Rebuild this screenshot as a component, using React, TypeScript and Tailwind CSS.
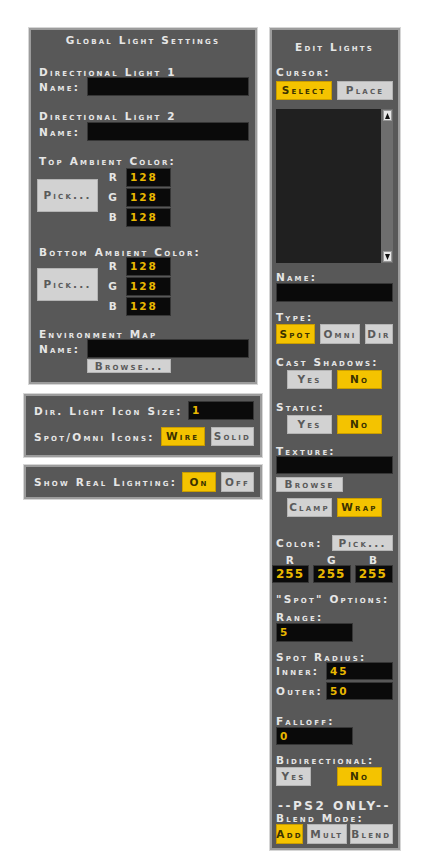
import React from 'react';

const font = "font-['DejaVu_Sans',sans-serif] font-bold [font-variant:small-caps] tracking-[2.2px]";

const Label = ({ text, className = '' }: { text: string; className?: string }) => (
  <div className={`h-[10px] leading-[10px] text-[10.5px] text-[#e6e6e6] whitespace-nowrap ${font} ${className}`}>
    {text}
  </div>
);

type BtnProps = { text: string; on?: boolean; className?: string };

const Btn = ({ text, on = false, className = '' }: BtnProps) => (
  <div
    className={`flex items-center justify-center text-[10.5px] leading-none whitespace-nowrap border ${font} ${
      on ? 'bg-[#f4c300] border-[#c99d00] text-[#3b3200]' : 'bg-[#d2d2d2] border-[#b4b4b4] text-[#5a5a5a]'
    } ${className}`}
  >
    {text}
  </div>
);

const Field = ({ value = '', className = '', big = false }: { value?: string; className?: string; big?: boolean }) => (
  <div
    className={`flex items-center bg-[#0a0a0a] border border-[#363636] text-[#e9b800] font-['DejaVu_Sans',sans-serif] font-bold leading-none ${
      big ? 'text-[12px] tracking-[1px] pl-[3px]' : 'text-[10.5px] tracking-[2px] pl-[3px]'
    } ${className}`}
  >
    {value}
  </div>
);

const ColorBlock = ({ className = '' }: { className?: string }) => (
  <div className={`flex items-center h-[59px] ${className}`}>
    <Btn text="Pick..." className="w-[61px] h-[33px] -ml-[2px] -mt-[4px]" />
    <div className="flex flex-col gap-[1px]">
      {['R', 'G', 'B'].map((c) => (
        <div key={c} className="flex items-center h-[19px]">
          <div className={`w-[28px] pr-[7px] text-right text-[10.5px] text-[#e6e6e6] ${font}`}>{c}</div>
          <Field value="128" className="w-[45px] h-[19px]" />
        </div>
      ))}
    </div>
  </div>
);

const NameRow = ({ className = '' }: { className?: string }) => (
  <div className={`flex items-center h-[19px] ${className}`}>
    <Label text="Name:" className="w-[48px]" />
    <Field className="w-[162px] h-[19px]" />
  </div>
);

const panel = 'bg-[#585858] border-2 border-[#9c9c9c] shadow-[0_0_0_1px_#d6d6d6]';

const GlobalPanel = () => (
  <div className={`${panel} mx-[5px] h-[356px] pl-[8px] flex flex-col`}>
    <Label text="Global Light Settings" className="mt-[5px] text-center -ml-[8px]" />
    <Label text="Directional Light 1" className="mt-[22px]" />
    <NameRow />
    <Label text="Directional Light 2" className="mt-[15px]" />
    <NameRow className="mt-[1px]" />
    <Label text="Top Ambient Color:" className="mt-[15px]" />
    <ColorBlock className="mt-[2px]" />
    <Label text="Bottom Ambient Color:" className="mt-[20px]" />
    <ColorBlock />
    <Label text="Environment Map" className="mt-[13px]" />
    <NameRow />
    <Btn text="Browse..." className="mt-[1px] ml-[48px] w-[84px] h-[14px]" />
  </div>
);

const IconPanel = () => (
  <div className={`${panel} mt-[10px] h-[63px] pl-[8px] pr-[6px] py-[5px] flex flex-col gap-[7px]`}>
    <div className="flex items-center h-[19px]">
      <Label text="Dir. Light Icon Size:" />
      <Field value="1" className="ml-auto w-[66px] h-[19px]" />
    </div>
    <div className="flex items-center h-[19px] gap-[6px]">
      <Label text="Spot/Omni Icons:" />
      <Btn text="Wire" on className="ml-auto w-[45px] h-[19px]" />
      <Btn text="Solid" className="w-[44px] h-[19px]" />
    </div>
  </div>
);

const LightingPanel = () => (
  <div className={`${panel} mt-[8px] h-[34px] pl-[8px] pr-[6px] flex items-center gap-[5px]`}>
    <Label text="Show Real Lighting:" />
    <Btn text="On" on className="ml-auto w-[34px] h-[20px]" />
    <Btn text="Off" className="w-[33px] h-[20px]" />
  </div>
);

const ScrollArrow = ({ up }: { up: boolean }) => (
  <div className="w-[9px] h-[11px] bg-[#e8e8e8] border border-[#9a9a9a] flex items-center justify-center">
    <svg width="5" height="6" viewBox="0 0 5 6">
      <path d={up ? 'M2.5 0 L5 6 L0 6 Z' : 'M0 0 L5 0 L2.5 6 Z'} fill="#111" />
    </svg>
  </div>
);

const EditPanel = () => (
  <div className={`${panel} w-[130px] h-[822px] pl-[4px] pr-[5px] flex flex-col`}>
    <Label text="Edit Lights" className="mt-[12px] text-center" />
    <Label text="Cursor:" className="mt-[15px]" />
    <div className="flex gap-[5px] mt-[4px]">
      <Btn text="Select" on className="w-[56px] h-[19px]" />
      <Btn text="Place" className="w-[56px] h-[19px]" />
    </div>
    <div className="flex mt-[9px] h-[154px]">
      <div className="w-[105px] bg-[#202020]" />
      <div className="w-[12px] bg-[#6e6e6e] flex flex-col items-center justify-between py-[1px]">
        <ScrollArrow up />
        <ScrollArrow up={false} />
      </div>
    </div>
    <Label text="Name:" className="mt-[9px]" />
    <Field className="mt-[1px] w-[117px] h-[19px]" />
    <Label text="Type:" className="mt-[10px]" />
    <div className="flex gap-[5px] mt-[2px]">
      <Btn text="Spot" on className="w-[39px] h-[20px]" />
      <Btn text="Omni" className="w-[40px] h-[20px]" />
      <Btn text="Dir" className="w-[28px] h-[20px]" />
    </div>
    <Label text="Cast Shadows:" className="mt-[13px]" />
    <div className="flex gap-[5px] mt-[3px] ml-[11px]">
      <Btn text="Yes" className="w-[45px] h-[19px]" />
      <Btn text="No" on className="w-[45px] h-[19px]" />
    </div>
    <Label text="Static:" className="mt-[13px]" />
    <div className="flex gap-[5px] mt-[3px] ml-[11px]">
      <Btn text="Yes" className="w-[45px] h-[19px]" />
      <Btn text="No" on className="w-[45px] h-[19px]" />
    </div>
    <Label text="Texture:" className="mt-[12px]" />
    <Field className="w-[117px] h-[18px]" />
    <Btn text="Browse" className="mt-[3px] w-[67px] h-[15px]" />
    <div className="flex gap-[5px] mt-[6px] ml-[11px]">
      <Btn text="Clamp" className="w-[45px] h-[19px]" />
      <Btn text="Wrap" on className="w-[45px] h-[19px]" />
    </div>
    <div className="flex items-center mt-[18px] h-[16px]">
      <Label text="Color:" />
      <Btn text="Pick..." className="ml-auto w-[61px] h-[16px]" />
    </div>
    <div className="flex -ml-[4px] gap-[4px] mt-[4px]">
      {['R', 'G', 'B'].map((c) => (
        <Label key={c} text={c} className="w-[39px] text-center" />
      ))}
    </div>
    <div className="flex -ml-[4px] gap-[4px]">
      <Field value="255" big className="w-[39px] h-[18px]" />
      <Field value="255" big className="w-[39px] h-[18px]" />
      <Field value="255" big className="w-[40px] h-[18px]" />
    </div>
    <Label text={'"Spot" Options:'} className="mt-[11px]" />
    <Label text="Range:" className="mt-[8px]" />
    <Field value="5" className="mt-[1px] w-[77px] h-[19px]" />
    <Label text="Spot Radius:" className="mt-[10px]" />
    <div className="flex items-center h-[18px]">
      <Label text="Inner:" />
      <Field value="45" className="ml-auto w-[67px] h-[18px]" />
    </div>
    <div className="flex items-center h-[18px] mt-[2px]">
      <Label text="Outer:" />
      <Field value="50" className="ml-auto w-[67px] h-[18px]" />
    </div>
    <Label text="Falloff:" className="mt-[16px]" />
    <Field value="0" className="mt-[1px] w-[77px] h-[18px]" />
    <Label text="Bidirectional:" className="mt-[10px]" />
    <div className="flex mt-[2px]">
      <Btn text="Yes" className="w-[35px] h-[19px]" />
      <Btn text="No" on className="ml-[26px] w-[45px] h-[19px]" />
    </div>
    <div className="mt-[14px] h-[12px] leading-[12px] text-[12px] text-[#e6e6e6] text-center tracking-[2.5px] whitespace-nowrap font-['DejaVu_Sans',sans-serif] font-bold">
      --PS2 ONLY--
    </div>
    <Label text="Blend Mode:" className="mt-[1px] h-[8px] leading-[8px]" />
    <div className="flex mt-[1px] gap-[4px]">
      <Btn text="Add" on className="w-[27px] h-[20px] tracking-[1px]" />
      <Btn text="Mult" className="w-[40px] h-[20px] tracking-[1.5px]" />
      <Btn text="Blend" className="w-[44px] h-[20px] -ml-[1px] tracking-[1.5px]" />
    </div>
  </div>
);

export default function App() {
  return (
    <div className="w-[432px] h-[864px] bg-white flex pt-[28px] pl-[24px] gap-[8px]">
      <div className="w-[238px] flex flex-col">
        <GlobalPanel />
        <IconPanel />
        <LightingPanel />
      </div>
      <EditPanel />
    </div>
  );
}
